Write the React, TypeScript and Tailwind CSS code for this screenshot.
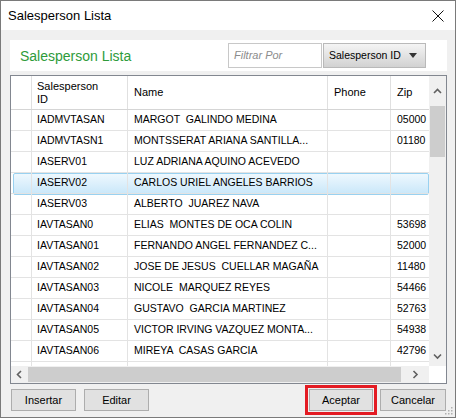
import React from 'react';

const rows: [string, string, string, string][] = [
  ['IADMVTASAN', 'MARGOT  GALINDO MEDINA', '', '05000'],
  ['IADMVTASN1', 'MONTSSERAT ARIANA SANTILLA...', '', '01180'],
  ['IASERV01', 'LUZ ADRIANA AQUINO ACEVEDO', '', ''],
  ['IASERV02', 'CARLOS URIEL ANGELES BARRIOS', '', ''],
  ['IASERV03', 'ALBERTO  JUAREZ NAVA', '', ''],
  ['IAVTASAN0', 'ELIAS  MONTES DE OCA COLIN', '', '53698'],
  ['IAVTASAN01', 'FERNANDO ANGEL FERNANDEZ C...', '', '52000'],
  ['IAVTASAN02', 'JOSE DE JESUS  CUELLAR MAGAÑA', '', '11480'],
  ['IAVTASAN03', 'NICOLE  MARQUEZ REYES', '', '54466'],
  ['IAVTASAN04', 'GUSTAVO  GARCIA MARTINEZ', '', '52763'],
  ['IAVTASAN05', 'VICTOR IRVING VAZQUEZ MONTA...', '', '54938'],
  ['IAVTASAN06', 'MIREYA  CASAS GARCIA', '', '42796'],
  ['', '', '', ''],
];

const Chevron = ({ dir }: { dir: 'up' | 'down' | 'left' | 'right' }) => {
  const d = {
    up: 'M1 5 L4.5 1.5 L8 5',
    down: 'M1 1.5 L4.5 5 L8 1.5',
    left: 'M5 1 L1.5 4.5 L5 8',
    right: 'M1.5 1 L5 4.5 L1.5 8',
  }[dir];
  const horiz = dir === 'left' || dir === 'right';
  return (
    <svg width={horiz ? 7 : 9} height={horiz ? 9 : 7} viewBox={horiz ? '0 0 7 9' : '0 0 9 7'}>
      <path d={d} fill="none" stroke="#606060" strokeWidth="1.6" />
    </svg>
  );
};

const Btn = ({ label, width, marked }: { label: string; width: string; marked?: boolean }) => (
  <button
    className={`${width} h-[22px] bg-[#e1e1e1] border border-[#adadad] text-[11px] text-black ${
      marked ? 'outline-[3px] outline-solid outline-offset-[1px] outline-[#e31b23]' : ''
    }`}
  >
    {label}
  </button>
);

export default function App() {
  return (
    <div
      className="w-[456px] h-[418px] flex flex-col border border-[#7a7a7a] bg-[#f0f0f0] relative overflow-hidden"
      style={{ fontFamily: '"Liberation Sans", Arial, sans-serif' }}
    >
      {/* Title bar */}
      <div className="h-[29px] bg-white flex items-center justify-between pl-[7px] pr-[11px]">
        <span className="text-[13px] text-black">Salesperson Lista</span>
        <svg width="12" height="12" viewBox="0 0 12 12">
          <path d="M0.5 0.5 L11.5 11.5 M11.5 0.5 L0.5 11.5" stroke="#111" strokeWidth="1" />
        </svg>
      </div>

      {/* Body */}
      <div className="flex-1 flex flex-col pl-[9px] pr-[8px] pt-[10px]">
        {/* Header panel */}
        <div className="h-[31px] bg-white flex items-center pl-[10px] pr-[21px]">
          <span className="text-[14px] text-[#2e9b3a] flex-1 mt-[1px]">Salesperson Lista</span>
          <div className="w-[94px] h-[25px] border border-[#c8c8c8] bg-white flex items-center pl-[5px] text-[11px] italic text-[#8c8c8c]">
            Filtrar Por
          </div>
          <div className="ml-[1px] w-[103px] h-[25px] border border-[#b9b9b9] bg-gradient-to-b from-[#f4f4f4] to-[#d2d2d2] flex items-center justify-between pl-[5px] pr-[8px] text-[10.5px] text-black">
            <span>Salesperson ID</span>
            <svg width="8" height="5" viewBox="0 0 8 5">
              <path d="M0 0 L8 0 L4 5 Z" fill="#333" />
            </svg>
          </div>
        </div>

        {/* Grid */}
        <div className="mt-[4px] h-[309px] border border-[#828790] bg-white flex flex-col">
          <div className="flex-1 flex min-h-0">
            {/* Table */}
            <div className="flex-1 overflow-hidden flex flex-col text-[10.5px] text-black">
              <div className="h-[34px] shrink-0 flex border-b border-[#d5d5d5] bg-white text-[11px]">
                <div className="w-[21px] shrink-0 border-r border-[#e0e0e0]" />
                <div className="w-[96px] shrink-0 border-r border-[#e0e0e0] pl-[5px] flex flex-col justify-center leading-[13px]">
                  <span>Salesperson</span>
                  <span>ID</span>
                </div>
                <div className="w-[200px] shrink-0 border-r border-[#e0e0e0] pl-[6px] flex items-center">Name</div>
                <div className="w-[63px] shrink-0 border-r border-[#e0e0e0] pl-[6px] flex items-center">Phone</div>
                <div className="w-[60px] shrink-0 pl-[6px] flex items-center">Zip</div>
              </div>
              <div className="relative flex-1 min-h-0">
                {/* selection highlight, drawn behind the row text */}
                <div className="absolute left-[2px] right-0 top-[63px] h-[22px] rounded-[2px] border border-[#99d1f0] bg-gradient-to-b from-[#eef8fe] to-[#c9e7f9]" />
                {rows.map((r, i) => (
                  <div key={i} className="relative h-[21px] flex border-b border-[#e3e3e3]">
                    <div className="w-[21px] shrink-0 border-r border-[#e3e3e3]" />
                    <div className="w-[96px] shrink-0 border-r border-[#e3e3e3] pl-[5px] flex items-center whitespace-pre">
                      {r[0]}
                    </div>
                    <div className="w-[200px] shrink-0 border-r border-[#e3e3e3] pl-[6px] flex items-center whitespace-pre overflow-hidden">
                      {r[1]}
                    </div>
                    <div className="w-[63px] shrink-0 border-r border-[#e3e3e3] pl-[6px] flex items-center">{r[2]}</div>
                    <div className="w-[60px] shrink-0 pl-[6px] flex items-center">{r[3]}</div>
                  </div>
                ))}
              </div>
            </div>
            {/* Vertical scrollbar */}
            <div className="w-[17px] shrink-0 bg-[#f0f0f0] flex flex-col items-center">
              <div className="h-[30px] flex items-center justify-center">
                <Chevron dir="up" />
              </div>
              <div className="w-[15px] h-[51px] bg-[#cdcdcd]" />
              <div className="flex-1" />
              <div className="h-[17px] flex items-center justify-center pb-[2px]">
                <Chevron dir="down" />
              </div>
            </div>
          </div>
          {/* Horizontal scrollbar */}
          <div className="h-[17px] shrink-0 flex">
            <div className="flex-1 bg-[#f0f0f0] flex items-center">
              <div className="w-[17px] flex justify-center">
                <Chevron dir="left" />
              </div>
              <div className="w-[373px] h-[15px] bg-[#cdcdcd]" />
              <div className="flex-1 flex justify-center">
                <Chevron dir="right" />
              </div>
            </div>
            <div className="w-[17px] bg-white" />
          </div>
        </div>

        {/* Buttons */}
        <div className="mt-[5px] flex items-center pl-[1px] pr-[1px]">
          <Btn label="Insertar" width="w-[65px]" />
          <div className="w-[8px]" />
          <Btn label="Editar" width="w-[65px]" />
          <div className="flex-1" />
          <Btn label="Aceptar" width="w-[64px]" marked />
          <div className="w-[7px]" />
          <Btn label="Cancelar" width="w-[66px]" />
        </div>
      </div>

      {/* Resize grip */}
      <svg className="absolute right-[2px] bottom-[2px]" width="9" height="9" viewBox="0 0 9 9">
        {[
          [7, 1],
          [4, 4],
          [7, 4],
          [1, 7],
          [4, 7],
          [7, 7],
        ].map(([x, y], i) => (
          <rect key={i} x={x} y={y} width="1.5" height="1.5" fill="#b0b0b0" />
        ))}
      </svg>
    </div>
  );
}
